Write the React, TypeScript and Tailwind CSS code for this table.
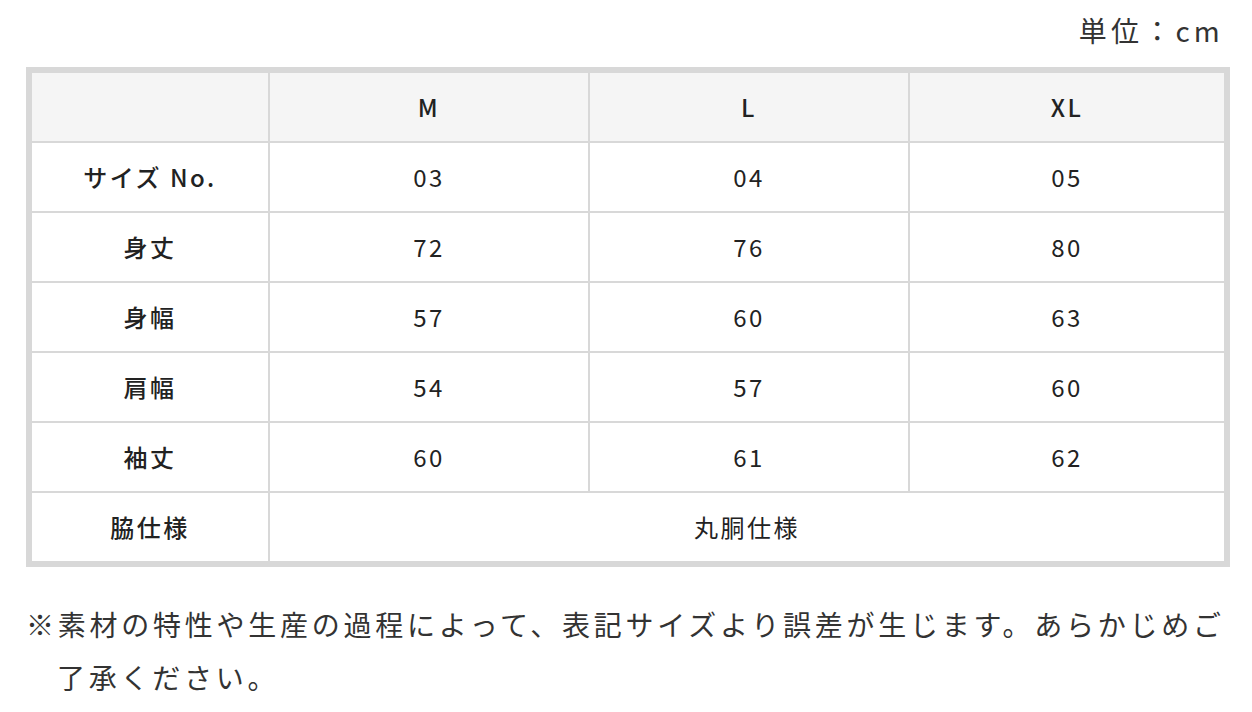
const font = { fontFamily: '"Noto Sans CJK JP", "Noto Sans", sans-serif' };

const rows = [
  { label: "サイズ No.", values: ["03", "04", "05"] },
  { label: "身丈", values: ["72", "76", "80"] },
  { label: "身幅", values: ["57", "60", "63"] },
  { label: "肩幅", values: ["54", "57", "60"] },
  { label: "袖丈", values: ["60", "61", "62"] },
];

const Cell = ({ children, head = false, bold = false, className = "" }: { children?: React.ReactNode; head?: boolean; bold?: boolean; className?: string }) => (
  <div
    className={`h-[68px] flex items-center justify-center text-[24px] tracking-[2.5px] text-[#222] ${head ? "bg-[#f5f5f5]" : "bg-white"} ${bold ? "font-medium" : "font-normal"} ${className}`}
  >
    {children}
  </div>
);

export default function App() {
  return (
    <div className="w-[1252px] h-[712px] bg-white px-[26px] overflow-hidden" style={font}>
      {/* Unit */}
      <div className="h-[67px] flex items-center justify-end pb-[8px] pr-[2px] text-[28px] tracking-[0.15em] text-[#333]">
        単位：cm
      </div>

      {/* Size table */}
      <div className="w-[1204px] border-[6px] border-[#d8d8d8]">
        <div className="grid grid-cols-[236px_318px_318px_314px] gap-[2px] bg-[#d8d8d8]">
          <Cell head />
          <Cell head bold>M</Cell>
          <Cell head bold>L</Cell>
          <Cell head bold>XL</Cell>
          {rows.map((r) => (
            <div key={r.label} className="contents">
              <Cell bold>{r.label}</Cell>
              {r.values.map((v, i) => (
                <Cell key={i}>{v}</Cell>
              ))}
            </div>
          ))}
          <Cell bold>脇仕様</Cell>
          <Cell className="col-span-3">丸胴仕様</Cell>
        </div>
      </div>

      {/* Note */}
      <p className="mt-[31px] -mr-[14px] pl-[31px] -indent-[31px] text-[28px] leading-[53px] tracking-[3.75px] text-[#333]">
        ※素材の特性や生産の過程によって、表記サイズより誤差が生じます。あらかじめご了承ください。
      </p>
    </div>
  );
}
